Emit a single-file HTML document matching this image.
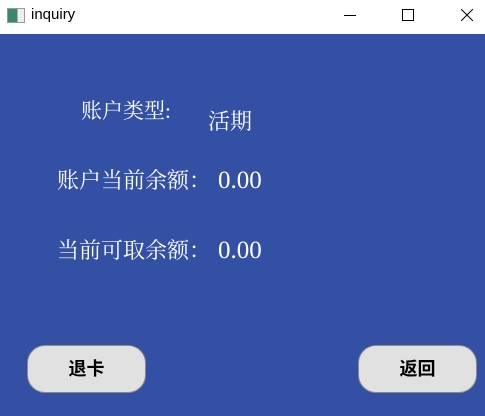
<!DOCTYPE html>
<html><head><meta charset="utf-8"><style>
body{margin:0;width:485px;height:416px;overflow:hidden;background:#3450a4;position:relative;font-family:"Liberation Serif","Noto Serif CJK SC",serif}
.bar{position:absolute;left:0;top:0;width:485px;height:34px;background:#fff}
.t{position:absolute;color:#fff;font-size:22px;line-height:22px;white-space:nowrap}
.n{position:absolute;color:#fff;font-size:25px;line-height:22px;white-space:nowrap}
.b{position:absolute;top:345px;width:117px;height:46px;background:#e1e1e1;border:1px solid #8a8a8a;border-radius:18px;font-family:"Liberation Sans","Noto Sans CJK SC",sans-serif;font-weight:bold;font-size:18px;line-height:46px;text-align:center;color:#000}
</style></head><body>
<div class="bar">
<div style="position:absolute;left:7px;top:8px;width:16px;height:13px;border:1px solid #999;background:linear-gradient(90deg,#3a8a6a 60%,#eee 60%)"></div>
<div style="position:absolute;left:31px;top:6px;font-family:'Liberation Sans',sans-serif;font-size:15px;color:#000">inquiry</div>
<div style="position:absolute;left:344px;top:15px;width:12px;height:1px;background:#000"></div>
<div style="position:absolute;left:402px;top:9px;width:10px;height:10px;border:1px solid #000"></div>
<svg style="position:absolute;left:461px;top:9px" width="12" height="12"><path d="M0 0L12 12M12 0L0 12" stroke="#000" stroke-width="1"/></svg>
</div>
<div class="t" style="left:81px;top:100px;font-size:21px">账户类型:</div>
<div class="t" style="left:208px;top:111px">活期</div>
<div class="t" style="left:57px;top:170px">账户当前余额：</div>
<div class="n" style="left:218px;top:170px">0.00</div>
<div class="t" style="left:57px;top:240px">当前可取余额：</div>
<div class="n" style="left:218px;top:240px">0.00</div>
<div class="b" style="left:27px">退卡</div>
<div class="b" style="left:358px">返回</div>
</body></html>
